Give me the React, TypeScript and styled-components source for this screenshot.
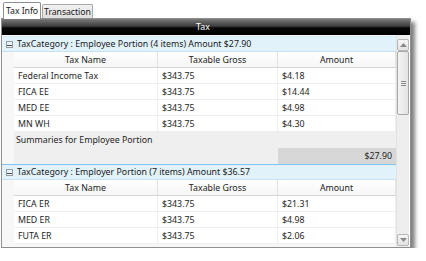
import styled, { createGlobalStyle } from "styled-components";

const GlobalStyle = createGlobalStyle`
  html, body {
    margin: 0;
    padding: 0;
    background: #ffffff;
  }
  body {
    font-family: "Noto Sans", "Open Sans", sans-serif;
    font-size: 8.8px;
    color: #1e1e1e;
  }
`;

type TaxRow = { name: string; gross: string; amount: string };

const employee: TaxRow[] = [
  { name: "Federal Income Tax", gross: "$343.75", amount: "$4.18" },
  { name: "FICA EE", gross: "$343.75", amount: "$14.44" },
  { name: "MED EE", gross: "$343.75", amount: "$4.98" },
  { name: "MN WH", gross: "$343.75", amount: "$4.30" },
];

const employer: TaxRow[] = [
  { name: "FICA ER", gross: "$343.75", amount: "$21.31" },
  { name: "MED ER", gross: "$343.75", amount: "$4.98" },
  { name: "FUTA ER", gross: "$343.75", amount: "$2.06" },
];

const App = () => {
  return (
    <>
      <GlobalStyle />
      <Window>
        <Tabs>
          <Tab $active>Tax Info</Tab>
          <Tab>Transaction</Tab>
        </Tabs>
        <Frame>
          <TitleBar>Tax</TitleBar>
          <Body>
            <Grid>
              <GroupHeader>
                <Toggle />
                TaxCategory : Employee Portion (4 items) Amount $27.90
              </GroupHeader>
              <Indented>
                <ColumnRow>
                  <HeadCell>Tax Name</HeadCell>
                  <HeadCell>Taxable Gross</HeadCell>
                  <HeadCell>Amount</HeadCell>
                </ColumnRow>
                {employee.map((r) => (
                  <DataRow key={r.name}>
                    <Cell>{r.name}</Cell>
                    <Cell>{r.gross}</Cell>
                    <Cell>{r.amount}</Cell>
                  </DataRow>
                ))}
                <Summary>
                  <SummaryLabel>Summaries for Employee Portion</SummaryLabel>
                  <SummaryRow>
                    <span />
                    <span />
                    <Total>$27.90</Total>
                  </SummaryRow>
                </Summary>
              </Indented>
              <GroupHeader $second>
                <Toggle />
                TaxCategory : Employer Portion (7 items) Amount $36.57
              </GroupHeader>
              <Indented>
                <ColumnRow>
                  <HeadCell>Tax Name</HeadCell>
                  <HeadCell>Taxable Gross</HeadCell>
                  <HeadCell>Amount</HeadCell>
                </ColumnRow>
                {employer.map((r) => (
                  <DataRow key={r.name}>
                    <Cell>{r.name}</Cell>
                    <Cell>{r.gross}</Cell>
                    <Cell>{r.amount}</Cell>
                  </DataRow>
                ))}
              </Indented>
            </Grid>
            <ScrollBar>
              <ScrollButton>
                <svg width="7" height="4" viewBox="0 0 7 4">
                  <path d="M0 4 L3.5 0 L7 4 Z" fill="#8a8a8a" />
                </svg>
              </ScrollButton>
              <Thumb>
                <Grip />
              </Thumb>
              <Track />
              <ScrollButton>
                <svg width="7" height="4" viewBox="0 0 7 4">
                  <path d="M0 0 L3.5 4 L7 0 Z" fill="#8a8a8a" />
                </svg>
              </ScrollButton>
            </ScrollBar>
          </Body>
        </Frame>
      </Window>
    </>
  );
};

const Window = styled.div`
  width: 410px;
  margin: 1px 0 0 1px;
  display: flex;
  flex-direction: column;
`;

const Tabs = styled.div`
  display: flex;
  align-items: flex-end;
  height: 17px;
  padding-left: 2px;
  gap: 1px;
`;

const Tab = styled.div<{ $active?: boolean }>`
  height: ${(p) => (p.$active ? "17px" : "14px")};
  padding: 0 ${(p) => (p.$active ? "2px" : "1px")};
  display: flex;
  align-items: center;
  border: 1px solid ${(p) => (p.$active ? "#8c8e94" : "#a8a8a8")};
  border-bottom: none;
  border-radius: 2px 2px 0 0;
  background: ${(p) =>
    p.$active ? "#ffffff" : "linear-gradient(#f2f2f2, #dedede)"};
  color: #1a1a1a;
  letter-spacing: -0.1px;
  margin-bottom: ${(p) => (p.$active ? "-1px" : "0")};
  position: relative;
  z-index: ${(p) => (p.$active ? 1 : 0)};
  box-sizing: border-box;
`;

const Frame = styled.div`
  border: 1px solid #8f8f8f;
  height: 230px;
  box-sizing: border-box;
  display: flex;
  flex-direction: column;
  background: #f2f2f2;
  box-shadow: 4px 4px 4px rgba(0, 0, 0, 0.5);
`;

const TitleBar = styled.div`
  height: 16px;
  flex-shrink: 0;
  background: linear-gradient(#7a7a7a 0%, #3c3c3c 45%, #080808 55%, #000000 100%);
  color: #ffffff;
  display: flex;
  align-items: center;
  justify-content: center;
  padding-right: 6px;
`;

const Body = styled.div`
  flex: 1;
  display: flex;
  min-height: 0;
  padding-right: 1px;
  background: #ffffff;
`;

const Grid = styled.div`
  flex: 1;
  overflow: hidden;
  padding-top: 1px;
  background: #f7f7f7;
`;

const GroupHeader = styled.div<{ $second?: boolean }>`
  height: 16px;
  display: flex;
  align-items: center;
  background: #e2f2fb;
  border-top: 1px solid ${(p) => (p.$second ? "#84c1ee" : "#d9eaf5")};
  border-bottom: 1px solid #c6e3f5;
  box-sizing: border-box;
  padding-left: 4px;
  white-space: nowrap;
  color: #1a1a1a;
`;

const Toggle = styled.span`
  width: 7px;
  height: 7px;
  border: 1px solid #9a9a9a;
  background: linear-gradient(
    transparent 3px,
    #555555 3px,
    #555555 4px,
    transparent 4px
  );
  box-sizing: border-box;
  margin-right: 4px;
  flex-shrink: 0;
`;

const Indented = styled.div`
  margin-left: 12px;
  background: #ffffff;
`;

const Columns = styled.div`
  display: grid;
  grid-template-columns: 144px 120px 1fr;
  height: 16px;
`;

const ColumnRow = styled(Columns)`
  border-bottom: 1px solid #d6d6d6;
  box-sizing: border-box;
  background: linear-gradient(#ffffff, #f6f6f6);
`;

const HeadCell = styled.div`
  display: flex;
  align-items: center;
  justify-content: center;
  border-right: 1px solid #e3e3e3;
  color: #222;
`;

const DataRow = styled(Columns)`
  border-bottom: 1px solid #efefef;
  box-sizing: border-box;
`;

const Cell = styled.div`
  display: flex;
  align-items: center;
  padding-left: 4px;
  border-right: 1px solid #efefef;
  white-space: nowrap;
`;

const Summary = styled.div`
  background: #efefef;
`;

const SummaryLabel = styled.div`
  height: 16px;
  display: flex;
  align-items: center;
  padding-left: 2px;
`;

const SummaryRow = styled(Columns)``;

const Total = styled.div`
  background: #d7d7d7;
  display: flex;
  align-items: center;
  justify-content: flex-end;
  padding-right: 4px;
`;

const ScrollBar = styled.div`
  width: 13px;
  flex-shrink: 0;
  display: flex;
  flex-direction: column;
  padding: 4px 0 1px;
  background: #eeeeee;
  border-left: 1px solid #e2e2e2;
  box-sizing: border-box;
`;

const ScrollButton = styled.div`
  height: 12px;
  flex-shrink: 0;
  border: 1px solid #b8b8b8;
  border-radius: 2px;
  background: linear-gradient(#f6f6f6, #e2e2e2);
  display: flex;
  align-items: center;
  justify-content: center;
  box-sizing: border-box;
`;

const Thumb = styled.div`
  height: 64px;
  flex-shrink: 0;
  border: 1px solid #a8a8a8;
  border-radius: 2px;
  background: linear-gradient(90deg, #f4f4f4, #e4e4e4);
  display: flex;
  align-items: center;
  justify-content: center;
  box-sizing: border-box;
`;

const Grip = styled.div`
  width: 5px;
  height: 5px;
  background: repeating-linear-gradient(
    #8a8a8a 0px,
    #8a8a8a 1px,
    transparent 1px,
    transparent 2px
  );
`;

const Track = styled.div`
  flex: 1;
`;

export default App;
